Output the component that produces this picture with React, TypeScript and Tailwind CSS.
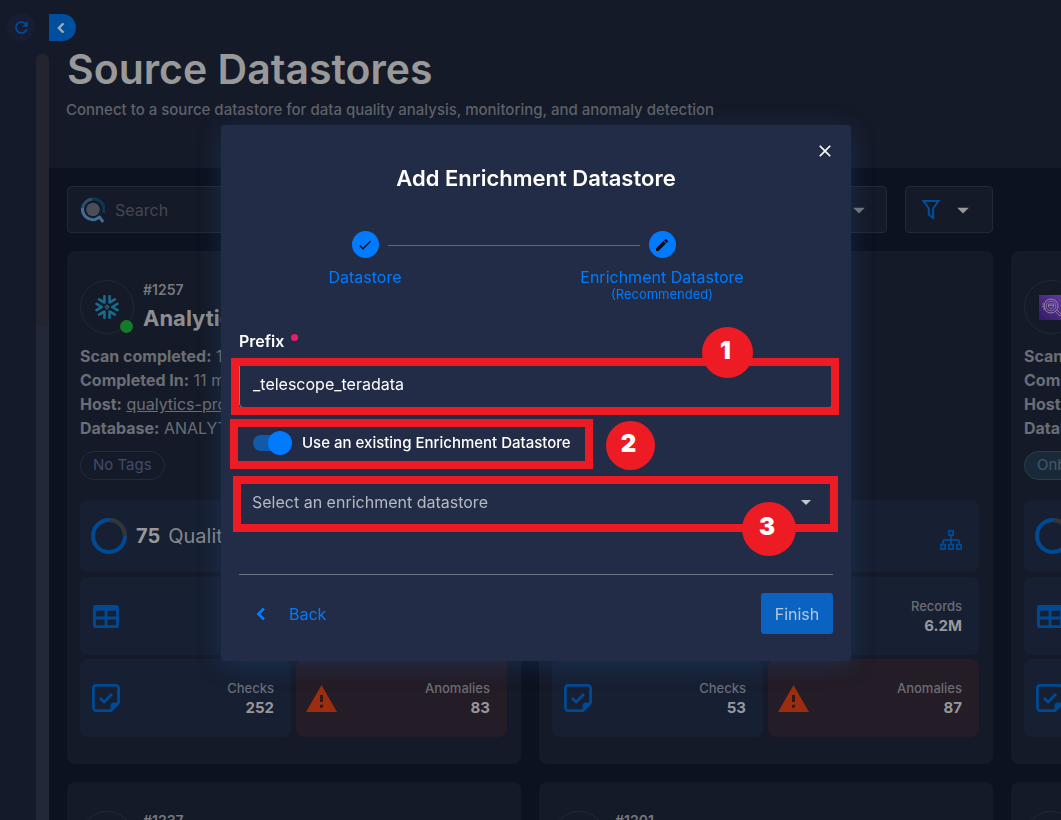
import { useState } from 'react'
import type { ReactNode } from 'react'

interface Store {
  id: string
  kind: 'snowflake' | 'athena'
  name: string
  scanned: string
  duration: string
  host: string
  database: string
  tag: string
  tagged?: boolean
  score: string
  records: string
  checks: string
  anomalies: string
}

const stores: Store[] = [
  { id: '#1257', kind: 'snowflake', name: 'Analytics', scanned: '1 day', duration: '11 min', host: 'qualytics-prod', database: 'ANALYTICS', tag: 'No Tags', score: '75', records: '6.2M', checks: '252', anomalies: '83' },
  { id: '', kind: 'snowflake', name: '', scanned: '', duration: '', host: '', database: '', tag: 'No Tags', score: '', records: '6.2M', checks: '53', anomalies: '87' },
  { id: '', kind: 'athena', name: '', scanned: '', duration: '', host: '', database: '', tag: 'Onboarding', tagged: true, score: '', records: '', checks: '', anomalies: '' },
  { id: '#1237', kind: 'snowflake', name: '', scanned: '', duration: '', host: '', database: '', tag: 'No Tags', score: '', records: '', checks: '', anomalies: '' },
  { id: '#1201', kind: 'snowflake', name: '', scanned: '', duration: '', host: '', database: '', tag: 'No Tags', score: '', records: '', checks: '', anomalies: '' },
  { id: '', kind: 'snowflake', name: '', scanned: '', duration: '', host: '', database: '', tag: 'No Tags', score: '', records: '', checks: '', anomalies: '' },
]

const paths = {
  refresh: 'M17.65,6.35C16.2,4.9 14.21,4 12,4A8,8 0 0,0 4,12A8,8 0 0,0 12,20C15.73,20 18.84,17.45 19.73,14H17.65C16.83,16.33 14.61,18 12,18A6,6 0 0,1 6,12A6,6 0 0,1 12,6C13.66,6 15.14,6.69 16.22,7.78L13,11H20V4L17.65,6.35Z',
  chevronLeft: 'M15.41,16.58L10.83,12L15.41,7.41L14,6L8,12L14,18L15.41,16.58Z',
  menuDown: 'M7,10L12,15L17,10H7Z',
  check: 'M21,7L9,19L3.5,13.5L4.91,12.09L9,16.17L19.59,5.59L21,7Z',
  pencil: 'M20.71,7.04C21.1,6.65 21.1,6 20.71,5.63L18.37,3.29C18,2.9 17.35,2.9 16.96,3.29L15.12,5.12L18.87,8.87M3,17.25V21H6.75L17.81,9.93L14.06,6.18L3,17.25Z',
  close: 'M19,6.41L17.59,5L12,10.59L6.41,5L5,6.41L10.59,12L5,17.59L6.41,19L12,13.41L17.59,19L19,17.59L13.41,12L19,6.41Z',
  alert: 'M13 14H11V9H13M13 18H11V16H13M1 21H23L12 2L1 21Z',
  table: 'M5,4H19A2,2 0 0,1 21,6V18A2,2 0 0,1 19,20H5A2,2 0 0,1 3,18V6A2,2 0 0,1 5,4M5,8V12H11V8H5M13,8V12H19V8H13M5,14V18H11V14H5M13,14V18H19V14H13Z',
}

function Icon({ name, className, viewBox = '0 0 24 24' }: { name: keyof typeof paths; className: string; viewBox?: string }) {
  return (
    <svg viewBox={viewBox} className={className} fill="currentColor" aria-hidden="true">
      <path d={paths[name]} />
    </svg>
  )
}

function SearchLogo() {
  return (
    <svg viewBox="0 0 24 26" className="w-6 h-[26px]" fill="none" aria-hidden="true">
      <path d="M11.5 2A10.5 10.5 0 0 0 1.6 12" stroke="#2c516e" strokeWidth="3" />
      <path d="M11.5 2A10.5 10.5 0 0 1 22.4 16" stroke="#0f3652" strokeWidth="3" />
      <path d="M1.6 11A10.5 10.5 0 0 0 14 22.6L18.5 20.2L22.2 25" stroke="#446d93" strokeWidth="3" />
      <circle cx="12" cy="12.5" r="6.8" fill="#4a4e58" />
    </svg>
  )
}

function StoreLogo({ kind }: { kind: Store['kind'] }) {
  if (kind === 'athena') {
    return (
      <svg viewBox="0 0 25 25" className="w-[25px] h-[25px]" fill="none" stroke="#9088a4" aria-hidden="true">
        <defs>
          <linearGradient id="athena" x1="0" y1="1" x2="1" y2="0">
            <stop offset="0" stopColor="#301964" />
            <stop offset="1" stopColor="#643c9e" />
          </linearGradient>
        </defs>
        <rect width="25" height="25" fill="url(#athena)" stroke="none" />
        <circle cx="12" cy="11" r="7" />
        <circle cx="12" cy="11" r="4.8" strokeWidth="0.8" />
        <path d="M9.5 9h5v3l-2.5 2l-2.5-2zM9.5 10.5h5M3 9h3M3 11.5h3M4 14h3M16.5 16.5l4.5 4.5l1.5-1.5l-4.5-4.5" strokeWidth="0.8" />
      </svg>
    )
  }
  return (
    <svg viewBox="0 0 24 26" className="w-6 h-[26px]" fill="none" stroke="#1a6b8c" strokeWidth="2.6" strokeLinecap="round" strokeLinejoin="round" aria-hidden="true">
      {[0, 60, 120, 180, 240, 300].map(a => (
        <path key={a} d="M22.5 9.9L17.2 13L22.5 16.1" transform={`rotate(${a} 12 13)`} />
      ))}
      <path d="M12 11.2l1.8 1.8l-1.8 1.8l-1.8-1.8z" strokeWidth="1.2" />
    </svg>
  )
}

function ScoreRing() {
  return (
    <svg viewBox="0 0 36 36" className="w-9 h-9 flex-shrink-0" fill="none" strokeWidth="4" aria-hidden="true">
      <circle cx="18" cy="18" r="16" stroke="#004a94" />
      <path d="M18 2A16 16 0 0 1 34 18" stroke="#363532" />
    </svg>
  )
}

function NoteCheck() {
  return (
    <svg viewBox="0 0 28 28" className="w-7 h-7 text-[#004a94]" fill="none" stroke="currentColor" strokeWidth="2.8" aria-hidden="true">
      <path d="M19 26.6H4.5A3 3 0 0 1 1.4 23.5V4.5A3 3 0 0 1 4.5 1.4H23.5A3 3 0 0 1 26.6 4.5V19L19 26.6Z" />
      <path d="M18.5 27V22A3.5 3.5 0 0 1 22 18.5H27L18.5 27Z" fill="currentColor" stroke="none" />
      <path d="M8 14L12.2 18L20 10" />
    </svg>
  )
}

function Sitemap() {
  return (
    <svg viewBox="0 0 22 20" className="w-[22px] h-5 text-[#004a94]" fill="none" stroke="currentColor" strokeWidth="1.8" aria-hidden="true">
      <path d="M8.8 .9h4.4v4.2H8.8zM.9 14.6h4.2V19H.9zM8.9 14.6h4.2V19H8.9zM16.9 14.6h4.2V19h-4.2zM11 5v9.5M3 14.5V11.5Q3 9.8 4.5 9.8H17.5Q19 9.8 19 11.5V14.5" />
    </svg>
  )
}

function Figure({ label, value }: { label: string; value: string }) {
  return (
    <div className="ml-auto text-right">
      <div className="text-[13px] leading-5 font-medium text-[#6b6d73]">{label}</div>
      <div className="text-[15px] leading-5 font-bold text-[#97989b]">{value}</div>
    </div>
  )
}

function StoreCard({ store }: { store: Store }) {
  return (
    <article className="rounded-lg bg-[#151a28] pl-[13px] pr-[14px] pt-[29px] pb-[27px] text-[#6b6e75]">
      <div className="flex gap-[9px]">
        <div className="relative flex w-[54px] h-[54px] flex-shrink-0 items-center justify-center rounded-full border border-[#232835]">
          <StoreLogo kind={store.kind} />
          {store.kind === 'snowflake' && (
            <span className="absolute right-0 bottom-0 w-[13px] h-[13px] rounded-full bg-[#177a2b]" />
          )}
        </div>
        <div>
          <div className="text-sm leading-5 font-semibold text-[#76787d]">{store.id}</div>
          <h2 className="mt-1 text-[22px] leading-7 font-bold text-[#8d8e90]">{store.name}</h2>
        </div>
      </div>
      <div className="mt-[10px] text-base leading-6 whitespace-nowrap">
        <div><b>Scan completed:</b> {store.scanned}</div>
        <div><b>Completed In:</b> {store.duration}</div>
        <div><b>Host:</b> {store.host && <a href="#host" className="underline">{store.host}</a>}</div>
        <div><b>Database:</b> {store.database}</div>
      </div>
      <div className="mt-[11px] flex">
        <span className={store.tagged
          ? 'flex h-[29px] items-center rounded-full border border-[#28404b] bg-[#1a2938] px-3 text-[15px] text-[#42596a]'
          : 'flex h-[29px] items-center rounded-full border border-[#242b40] px-3 text-[15px] text-[#414b6c]'}>
          {store.tag}
        </span>
      </div>
      <div className="mt-5 flex h-[72px] items-center rounded-lg bg-[#171f32] pl-[11px] pr-[17px]">
        <ScoreRing />
        {store.score && (
          <>
            <span className="ml-[9px] text-xl font-bold text-[#97989b]">{store.score}</span>
            <span className="ml-2 text-xl text-[#85878c]">Quality Score</span>
          </>
        )}
        <span className="ml-auto mt-2"><Sitemap /></span>
      </div>
      <div className="mt-[5px] flex h-[78px] items-center rounded-lg bg-[#171f32] pl-[13px] pr-[17px]">
        <Icon name="table" viewBox="3 4 18 16" className="w-[26px] h-[23px] text-[#004a94]" />
        <Figure label="Records" value={store.records} />
      </div>
      <div className="mt-1 grid grid-cols-2 gap-[5px]">
        <div className="flex h-[78px] items-center rounded-lg bg-[#171f32] pl-3 pr-[17px]">
          <NoteCheck />
          <Figure label="Checks" value={store.checks} />
        </div>
        <div className="flex h-[78px] items-center rounded-lg bg-[#241c26] pl-[10px] pr-[17px]">
          <Icon name="alert" viewBox="1 2 22 19" className="w-[31px] h-[27px] text-[#9c2d0f]" />
          <Figure label="Anomalies" value={store.anomalies} />
        </div>
      </div>
    </article>
  )
}

function Marker({ n, box, dot }: { n: number; box: string; dot: string }) {
  return (
    <>
      <span className={`pointer-events-none absolute border-8 border-[#ed1c24] ${box}`} />
      <span className={`pointer-events-none absolute flex items-center justify-center rounded-full bg-[#ed1c24] pb-1 pr-1 text-2xl font-black text-white ${dot}`}>
        {n}
      </span>
    </>
  )
}

function Step({ icon, label, note }: { icon: ReactNode; label: string; note?: string }) {
  return (
    <div className="flex w-[252px] flex-col items-center text-[#007bff]">
      <span className="flex w-[27px] h-[27px] items-center justify-center rounded-full bg-[#007bff] text-[#060b14]">{icon}</span>
      <span className="mt-[9px] text-base leading-5 whitespace-nowrap">{label}</span>
      {note && <span className="text-[13px] leading-[14px]">{note}</span>}
    </div>
  )
}

function EnrichmentDialog() {
  const [prefix, setPrefix] = useState('_telescope_teradata')
  const [existing, setExisting] = useState(true)

  return (
    <div className="fixed inset-0 flex items-start justify-center overflow-hidden pt-[125px] pl-[11px]">
      <div role="dialog" aria-labelledby="dialog-title"
        className="w-[630px] max-w-full flex-shrink-0 rounded bg-[#232c46] px-[18px] pt-4 pb-[27px] text-base text-white shadow-[0_4px_24px_rgba(32,90,150,0.3)]">
        <div className="flex justify-end">
          <button aria-label="Close" className="-mr-[2px]"><Icon name="close" className="w-5 h-5" /></button>
        </div>
        <h2 id="dialog-title" className="text-center text-[22px] leading-[34px] font-semibold">Add Enrichment Datastore</h2>

        <div className="mt-9 flex justify-center pr-[45px]">
          <div className="relative flex gap-[45px]">
            <Step icon={<Icon name="check" className="w-4 h-4" />} label="Datastore" />
            <Step icon={<Icon name="pencil" className="w-4 h-4" />} label="Enrichment Datastore" note="(Recommended)" />
            <span className="absolute top-[14px] left-1/2 h-px w-[252px] -translate-x-1/2 bg-[#5f6778]" />
          </div>
        </div>

        <label htmlFor="prefix" className="mt-7 flex items-start gap-[7px] leading-6 font-semibold">
          Prefix
          <span className="mt-[5px] w-[7px] h-[7px] rounded-full bg-[#e91e63]" />
        </label>
        <div className="relative mt-[7px]">
          <input id="prefix" value={prefix} onChange={e => setPrefix(e.target.value)}
            className="h-12 w-full rounded border border-[#7b8290] bg-transparent px-[13px] outline-none" />
          <Marker n={1} box="-left-2 -right-[6px] -top-[2px] h-[57px]" dot="left-[463px] -top-[33px] w-[51px] h-[51px]" />
        </div>

        <div className="relative mt-[11px] flex h-12 items-center pl-[14px]">
          <label className="flex items-center gap-[11px] text-[15px] font-medium">
            <input type="checkbox" role="switch" checked={existing} onChange={e => setExisting(e.target.checked)}
              className="relative h-4 w-[38px] appearance-none rounded-full bg-[#115aa9] before:absolute before:-top-1 before:left-0 before:h-6 before:w-6 before:rounded-full before:bg-[#007bff] checked:before:left-[15px]" />
            Use an existing Enrichment Datastore
          </label>
          <Marker n={2} box="-left-[9px] w-[363px] top-0 h-[50px]" dot="left-[367px] top-[2px] w-[49px] h-[49px]" />
        </div>

        <div className="relative mt-[11px]">
          <select aria-label="Enrichment datastore"
            className="h-12 w-full appearance-none rounded border border-[#7b8290] bg-transparent px-3 text-[#b5b9c2] outline-none">
            <option>Select an enrichment datastore</option>
          </select>
          <Icon name="menuDown" className="pointer-events-none absolute right-[13px] top-3 w-7 h-6 text-[#c3c6cd]" />
          <Marker n={3} box="-left-[6px] -right-[5px] -top-[2px] h-14" dot="left-[503px] top-6 w-[54px] h-[54px]" />
        </div>

        <hr className="mt-12 border-[#6a7180]" />
        <div className="mt-[18px] flex items-center justify-between">
          <button className="flex items-center gap-4 pl-[10px] text-[#007bff]">
            <Icon name="chevronLeft" className="w-6 h-6 stroke-current" />
            Back
          </button>
          <button className="h-[41px] w-[72px] rounded-[3px] bg-[#0b63c1] text-[#b4c8e2]">Finish</button>
        </div>
      </div>
    </div>
  )
}

export default function App() {
  return (
    <div className="flex h-screen overflow-hidden bg-[#0c1220] font-['Inter',sans-serif]">
      <aside className="flex w-[49px] flex-shrink-0 bg-[#151a2a]">
        <button aria-label="Refresh" className="mt-[13px] ml-[7px] flex w-7 h-7 items-center justify-center rounded-full bg-[#171e33] text-[#004e9e]">
          <Icon name="refresh" className="w-[19px] h-[19px]" />
        </button>
        <div className="mt-[54px] ml-auto w-[13px] rounded-t-full bg-[#232838]">
          <div className="h-[272px] rounded-full bg-[#222430]" />
        </div>
      </aside>

      <main className="min-w-0 flex-1 overflow-hidden">
        <header className="h-[168px] bg-[#151a28] pt-[14px]">
          <button aria-label="Collapse" className="flex h-[27px] w-[27px] items-center rounded-r-full bg-[#004f9f] pl-[2px] text-[#a3acb8]">
            <Icon name="chevronLeft" className="w-5 h-5 stroke-current" />
          </button>
          <h1 className="ml-[18px] mt-1 text-[41px] leading-[48px] font-semibold text-[#999]">Source Datastores</h1>
          <p className="ml-[17px] mt-[5px] text-[15px] leading-6 font-medium text-[#5f6269]">
            Connect to a source datastore for data quality analysis, monitoring, and anomaly detection
          </p>
        </header>

        <div className="flex gap-[18px] px-[18px] pt-[18px]">
          <label className="flex h-[47px] w-[500px] items-center gap-[10px] rounded border border-[#232835] bg-[#151a28] pl-[13px]">
            <SearchLogo />
            <input placeholder="Search" aria-label="Search" className="min-w-0 flex-1 bg-transparent text-base outline-none placeholder:text-[#45474d]" />
          </label>
          <button aria-label="Sort" className="flex h-[47px] w-[302px] items-center justify-end rounded border border-[#232835] bg-[#151a28] pr-[13px] text-[#75777b]">
            <Icon name="menuDown" className="w-7 h-7" />
          </button>
          <button aria-label="Filter" className="flex h-[47px] w-[88px] items-center justify-center gap-[9px] rounded border border-[#232835] bg-[#151a28] text-[#999]">
            <svg viewBox="0 0 18 20" className="w-[18px] h-5 text-[#004f9f]" fill="none" stroke="currentColor" strokeWidth="2" aria-hidden="true">
              <path d="M1.5 1H16.5L11.2 8.5V18L6.8 14.5V8.5Z" />
            </svg>
            <Icon name="menuDown" className="w-7 h-7" />
          </button>
        </div>

        <div className="grid grid-cols-[454px_454px_454px] gap-[18px] px-[18px] pt-[18px]">
          {stores.map((s, i) => <StoreCard key={i} store={s} />)}
        </div>
      </main>

      <EnrichmentDialog />
    </div>
  )
}
